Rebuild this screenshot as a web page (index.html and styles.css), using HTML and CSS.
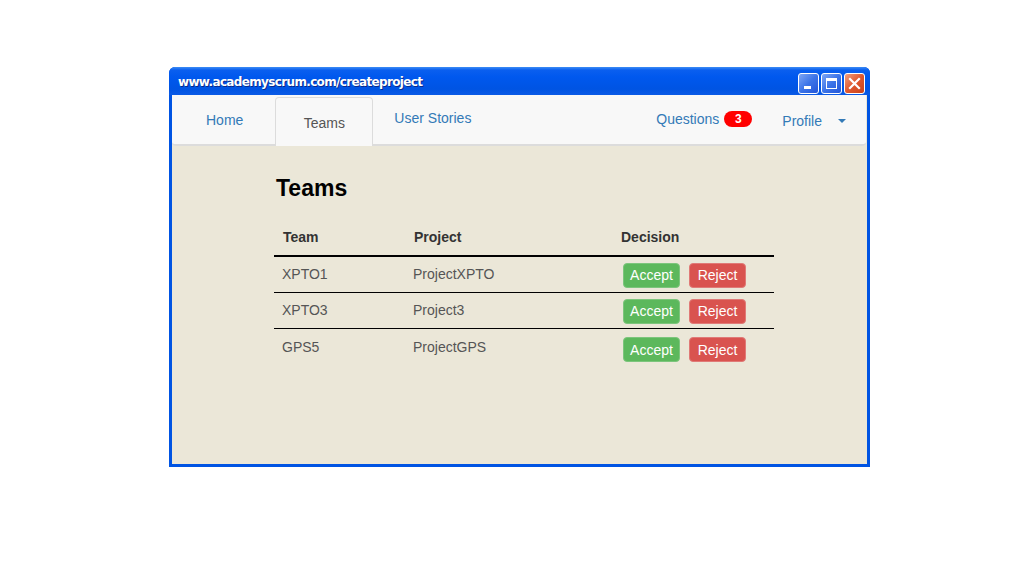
FILE: index.html
```html
<!DOCTYPE html>
<html>
<head>
<meta charset="utf-8">
<title>Teams</title>
<link rel="stylesheet" href="styles.css">
</head>
<body>
<div class="window">
  <div class="titlebar">
    <span class="title">www.academyscrum.com/createproject</span>
    <div class="winbtns">
      <span class="wbtn wmin"><span class="glyph-min"></span></span>
      <span class="wbtn wmax"><span class="glyph-max"></span></span>
      <span class="wbtn wclose">
        <svg width="13" height="13" viewBox="0 0 13 13"><path d="M2 2 L11 11 M11 2 L2 11" stroke="#fff" stroke-width="2.2" stroke-linecap="square"/></svg>
      </span>
    </div>
  </div>
  <div class="frame">
    <nav class="nav">
      <a class="nav-item home">Home</a>
      <a class="nav-item tab-active">Teams</a>
      <a class="nav-item stories">User Stories</a>
      <div class="nav-right">
        <a class="nav-item questions">Questions <span class="badge">3</span></a>
        <a class="nav-item profile">Profile <span class="caret"></span></a>
      </div>
    </nav>
    <main class="content">
      <h1 class="heading">Teams</h1>
      <table class="teams">
        <colgroup>
          <col class="c-team">
          <col class="c-proj">
          <col class="c-dec">
        </colgroup>
        <thead>
          <tr><th>Team</th><th>Project</th><th>Decision</th></tr>
        </thead>
        <tbody>
          <tr><td>XPTO1</td><td>ProjectXPTO</td><td class="actions"><button class="btn accept">Accept</button><button class="btn reject">Reject</button></td></tr>
          <tr><td>XPTO3</td><td>Project3</td><td class="actions"><button class="btn accept">Accept</button><button class="btn reject">Reject</button></td></tr>
          <tr class="last"><td>GPS5</td><td>ProjectGPS</td><td class="actions"><button class="btn accept">Accept</button><button class="btn reject">Reject</button></td></tr>
        </tbody>
      </table>
    </main>
  </div>
</div>
</body>
</html>
```
FILE: styles.css
```css
html, body {
  margin: 0;
  padding: 0;
  background: #ffffff;
}
body {
  padding: 67px 0 0 169px;
  font-family: "Liberation Sans", Arial, sans-serif;
}
.window {
  width: 701px;
  height: 400px;
  box-sizing: border-box;
  border: 3px solid #0054e3;
  border-top: none;
  border-radius: 6px 6px 0 0;
  background: #0054e3;
  display: flex;
  flex-direction: column;
}
.titlebar {
  height: 28px;
  margin: 0 -3px;
  border-radius: 6px 6px 0 0;
  background: linear-gradient(to bottom, #3d8df5 0px, #0a5fef 3px, #0058ee 10px, #0054e3 22px, #0b5ae6 28px);
  display: flex;
  align-items: center;
  justify-content: space-between;
  padding: 0 5px 0 9px;
}
.title {
  color: #ffffff;
  font-family: "DejaVu Sans", Verdana, sans-serif;
  font-weight: bold;
  font-size: 12px;
  letter-spacing: -0.65px;
  text-shadow: 1px 1px 0 #0a2a8a;
  margin-top: 2px;
}
.winbtns {
  display: flex;
  gap: 2px;
  margin-top: 4px;
}
.wbtn {
  width: 21px;
  height: 21px;
  box-sizing: border-box;
  border: 1px solid #ffffff;
  border-radius: 3px;
  position: relative;
  display: flex;
  align-items: center;
  justify-content: center;
}
.wmin, .wmax {
  background: linear-gradient(135deg, #7ea6f5 0%, #3c74e8 50%, #2456d8 100%);
}
.wclose {
  background: linear-gradient(135deg, #f0a080 0%, #e0582f 50%, #c8421a 100%);
}
.glyph-min {
  position: absolute;
  left: 5px;
  bottom: 4px;
  width: 7px;
  height: 3px;
  background: #fff;
}
.glyph-max {
  width: 11px;
  height: 11px;
  box-sizing: border-box;
  border: 1px solid #fff;
  border-top-width: 3px;
}
.frame {
  flex: 1;
  background: #ebe7d8;
  display: flex;
  flex-direction: column;
}
.nav {
  height: 51px;
  box-sizing: border-box;
  margin-right: 1px;
  background: #f8f8f8;
  border-bottom: 2px solid #dcdcdc;
  border-radius: 0 0 4px 4px;
  display: flex;
  align-items: stretch;
  font-size: 14px;
}
.nav-item {
  color: #337ab7;
  text-decoration: none;
  display: flex;
  align-items: center;
}
.home {
  padding: 1px 32px 0 34px;
}
.tab-active {
  margin-top: 2px;
  margin-bottom: -2px;
  width: 98px;
  box-sizing: border-box;
  justify-content: center;
  color: #555555;
  background: #f8f8f8;
  border: 1px solid #dcdcdc;
  border-bottom: none;
  border-radius: 4px 4px 0 0;
  padding-top: 2px;
}
.stories {
  margin-left: 21px;
  padding-bottom: 3px;
}
.nav-right {
  margin-left: auto;
  display: flex;
  align-items: stretch;
}
.questions {
  padding-bottom: 1px;
}
.badge {
  display: inline-block;
  background: #ff0000;
  color: #fff;
  font-weight: bold;
  font-size: 12px;
  line-height: 16px;
  height: 16px;
  min-width: 28px;
  text-align: center;
  border-radius: 8px;
  margin-left: 5px;
}
.profile {
  margin-left: 30px;
  padding-top: 3px;
  padding-right: 20px;
}
.caret {
  display: inline-block;
  width: 0;
  height: 0;
  border-left: 4px solid transparent;
  border-right: 4px solid transparent;
  border-top: 4px solid #337ab7;
  margin-left: 16px;
  margin-top: -1px;
}
.content {
  padding: 30px 0 0 104px;
}
.heading {
  margin: 0;
  font-size: 23px;
  line-height: 24px;
  font-weight: bold;
  color: #000;
}
.teams {
  margin-top: 19px;
  width: 500px;
  table-layout: fixed;
  border-collapse: collapse;
  font-size: 14px;
  color: #555555;
  margin-left: -2px;
}
.c-team { width: 131px; }
.c-proj { width: 207px; }
.c-dec { width: 162px; }
.teams th {
  text-align: left;
  font-weight: bold;
  color: #333333;
  padding: 8px 8px 8px 9px;
  line-height: 20px;
  border-bottom: 2px solid #000;
}
.teams td {
  padding: 5px 8px 4px 8px;
  line-height: 25px;
  border-top: 1px solid #000;
  white-space: nowrap;
}
.teams tbody tr:first-child td {
  border-top: none;
}
.teams tr.last td.actions {
  padding-top: 8px;
}
.teams tr.last td {
  padding-top: 5px;
}
.teams td.actions {
  padding-left: 11px;
}
.btn {
  font-family: "Liberation Sans", Arial, sans-serif;
  font-size: 14px;
  color: #fff;
  width: 57px;
  height: 25px;
  padding: 0;
  border-radius: 4px;
  vertical-align: middle;
  cursor: pointer;
}
.accept {
  background: #5cb85c;
  border: 1px solid #7cc57c;
}
.reject {
  margin-left: 9px;
  background: #d9534f;
  border: 1px solid #e07a77;
}
```
